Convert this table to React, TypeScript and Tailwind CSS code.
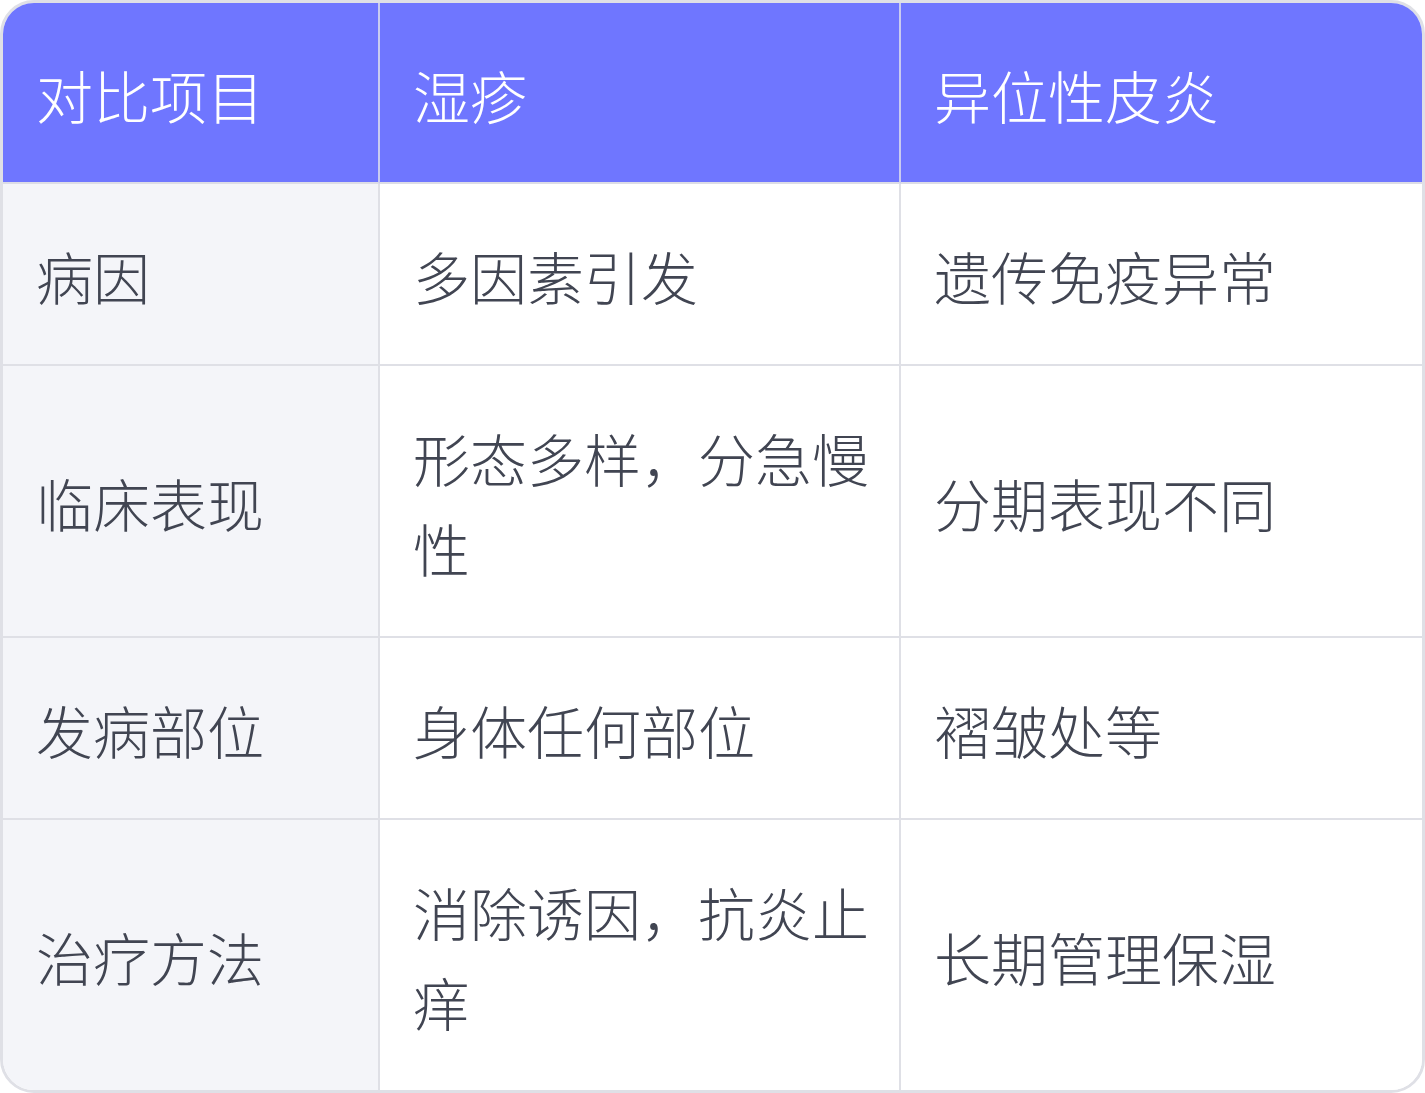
const rows = [
  { item: '病因', eczema: '多因素引发', atopic: '遗传免疫异常' },
  { item: '临床表现', eczema: '形态多样，分急慢性', atopic: '分期表现不同' },
  { item: '发病部位', eczema: '身体任何部位', atopic: '褶皱处等' },
  { item: '治疗方法', eczema: '消除诱因，抗炎止痒', atopic: '长期管理保湿' },
];

const cellBase = "flex items-center pl-[33px] pr-[28px] pt-[46px] pb-[44px] text-[57px] leading-[90px]";

export default function App() {
  return (
    <div
      className="w-[1425px] h-[1093px] bg-white font-light"
      style={{ fontFamily: '"Noto Sans CJK SC", "Noto Sans", sans-serif' }}
    >
      <div className="h-full overflow-hidden rounded-[34px] border-[3px] border-[#dfe0e6]">
        <div className="grid grid-cols-[377px_521px_1fr]">
          {['对比项目', '湿疹', '异位性皮炎'].map((h, i) => (
            <div
              key={h}
              className={`${cellBase} h-[181px] bg-[#6f76ff] text-white border-b-2 border-[#dcdde6] ${i < 2 ? 'border-r-2 border-r-[#c9cbf0]' : ''}`}
            >
              {h}
            </div>
          ))}
          {rows.map((r, ri) => {
            const last = ri === rows.length - 1;
            const rowBorder = last ? '' : 'border-b-2';
            return [
              <div key={r.item + 'a'} className={`${cellBase} ${rowBorder} border-r-2 border-[#dfe0e6] bg-[#f4f5f9] text-[#414552]`}>
                {r.item}
              </div>,
              <div key={r.item + 'b'} className={`${cellBase} ${rowBorder} border-r-2 border-[#dfe0e6] bg-white text-[#414552]`}>
                {r.eczema}
              </div>,
              <div key={r.item + 'c'} className={`${cellBase} ${rowBorder} border-[#dfe0e6] bg-white text-[#414552]`}>
                {r.atopic}
              </div>,
            ];
          })}
        </div>
      </div>
    </div>
  );
}
